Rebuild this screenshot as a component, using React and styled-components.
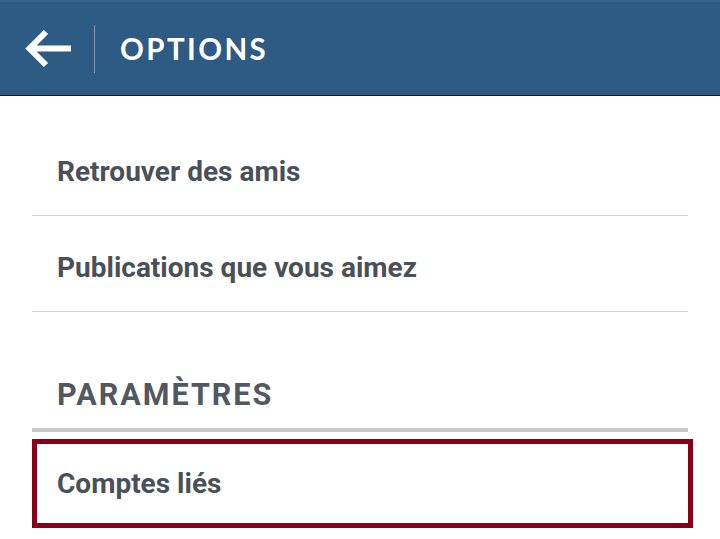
import React from "react";
import styled, { createGlobalStyle } from "styled-components";

const GlobalStyle = createGlobalStyle`
  html, body {
    margin: 0;
    padding: 0;
    background: #ffffff;
    font-family: Roboto, "Liberation Sans", sans-serif;
  }
`;

const Page = styled.div`
  width: 720px;
  height: 539px;
  overflow: hidden;
  background: #ffffff;
`;

const Header = styled.header`
  height: 93px;
  display: flex;
  align-items: center;
  background: #2e5b84;
  border-top: 2px solid #36638b;
  border-bottom: 1px solid #111820;
`;

const BackButton = styled.button`
  width: 95px;
  height: 48px;
  padding: 0 0 0 25px;
  border: none;
  border-right: 1px solid #7f98b2;
  background: transparent;
  display: flex;
  align-items: center;
  cursor: pointer;
`;

const Title = styled.h1`
  margin: 0 0 0 25px;
  font-family: Lato, "Open Sans", sans-serif;
  font-weight: 700;
  font-size: 29.5px;
  letter-spacing: 2.4px;
  color: #ffffff;
`;

const List = styled.div`
  padding: 24px 32px 0 32px;
`;

const Row = styled.div`
  position: relative;
  display: flex;
  align-items: center;
  padding: 8px 0 0 25px;
  box-sizing: border-box;
  height: 96px;
  border-bottom: 1px solid #d2d2d2;
  color: #4a5058;
  font-weight: 700;
  font-size: 28px;

  ${(p) =>
    p.$highlight &&
    `
    &::after {
      content: "";
      position: absolute;
      left: 0;
      right: -5px;
      top: 7px;
      bottom: -1px;
      border: 5px solid #8a0018;
    }
  `}
`;

const Section = styled.div`
  height: 120px;
  display: flex;
  align-items: flex-end;
  padding: 0 0 16px 25px;
  box-sizing: border-box;
  border-bottom: 4px solid #c9c9c9;
  color: #51585f;
  font-weight: 700;
  font-size: 30.5px;
  letter-spacing: 2px;
`;

const BackArrow = () => (
  <svg width="48" height="40" viewBox="0 0 48 40">
    <path
      d="M46 19.5H6 M21 3L4.5 19.5L21 36"
      fill="none"
      stroke="#ffffff"
      strokeWidth="6"
    />
  </svg>
);

export default function App() {
  return (
    <Page>
      <GlobalStyle />
      <Header>
        <BackButton aria-label="Retour">
          <BackArrow />
        </BackButton>
        <Title>OPTIONS</Title>
      </Header>
      <List>
        <Row>Retrouver des amis</Row>
        <Row>Publications que vous aimez</Row>
        <Section>PARAMÈTRES</Section>
        <Row $highlight>Comptes liés</Row>
      </List>
    </Page>
  );
}
